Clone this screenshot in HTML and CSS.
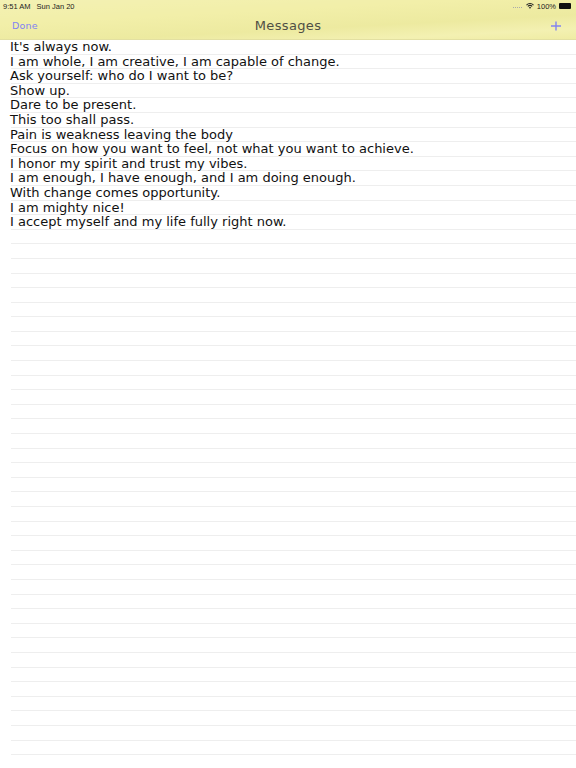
FILE: index.html
```html
<!DOCTYPE html>
<html lang="en">
<head>
<meta charset="utf-8">
<title>Messages</title>
<link rel="stylesheet" href="styles.css">
</head>
<body>
<header class="header">
  <div class="status">
    <div class="status-left"><span>9:51 AM</span><span>Sun Jan 20</span></div>
    <div class="status-right">
      <span class="dots"></span>
      <svg class="wifi" viewBox="0 0 12 9" width="8" height="6"><path d="M6 8.6 4.2 6.7a2.6 2.6 0 0 1 3.6 0ZM3.2 5.7 2.2 4.6a5.4 5.4 0 0 1 7.6 0L8.8 5.7a4 4 0 0 0-5.6 0ZM1.2 3.6.2 2.5a8.2 8.2 0 0 1 11.6 0l-1 1.1a6.8 6.8 0 0 0-9.6 0Z" fill="#222"/></svg>
      <span>100%</span>
      <span class="battery"></span>
    </div>
  </div>
  <div class="nav">
    <span class="done">Done</span>
    <span class="title">Messages</span>
    <svg class="plus" viewBox="0 0 10 10" width="10" height="10"><path d="M0 5h10M5 .5v9" stroke="#8284f0" stroke-width="1.4" fill="none"/></svg>
  </div>
</header>
<main class="list">
  <div class="row">It's always now.</div>
  <div class="row">I am whole, I am creative, I am capable of change.</div>
  <div class="row">Ask yourself: who do I want to be?</div>
  <div class="row">Show up.</div>
  <div class="row">Dare to be present.</div>
  <div class="row">This too shall pass.</div>
  <div class="row">Pain is weakness leaving the body</div>
  <div class="row">Focus on how you want to feel, not what you want to achieve.</div>
  <div class="row">I honor my spirit and trust my vibes.</div>
  <div class="row">I am enough, I have enough, and I am doing enough.</div>
  <div class="row">With change comes opportunity.</div>
  <div class="row">I am mighty nice!</div>
  <div class="row">I accept myself and my life fully right now.</div>
  <div class="row"></div><div class="row"></div><div class="row"></div><div class="row"></div><div class="row"></div><div class="row"></div><div class="row"></div><div class="row"></div><div class="row"></div>
  <div class="row"></div><div class="row"></div><div class="row"></div><div class="row"></div><div class="row"></div><div class="row"></div><div class="row"></div><div class="row"></div><div class="row"></div>
  <div class="row"></div><div class="row"></div><div class="row"></div><div class="row"></div><div class="row"></div><div class="row"></div><div class="row"></div><div class="row"></div><div class="row"></div>
  <div class="row"></div><div class="row"></div><div class="row"></div><div class="row"></div><div class="row"></div><div class="row"></div><div class="row"></div><div class="row"></div><div class="row"></div>
</main>
</body>
</html>
```
FILE: styles.css
```css
* { box-sizing: border-box; }
html, body { margin: 0; padding: 0; background: #fff; }
body { width: 576px; height: 768px; overflow: hidden; font-family: "DejaVu Sans", "Liberation Sans", sans-serif; }

.header {
  height: 40px;
  display: flex;
  flex-direction: column;
  background:
    linear-gradient(177deg, rgba(255,255,255,.12), rgba(255,255,255,0) 35%, rgba(190,190,80,.10) 65%, rgba(255,255,255,.10) 85%, rgba(190,190,80,.06)),
    #f2efa9;
  border-bottom: 1px solid #e3e0a2;
}
.status {
  height: 12px;
  padding: 0 3px;
  display: flex;
  justify-content: space-between;
  align-items: center;
  font: 7.5px "Liberation Sans", sans-serif;
  color: #222;
}
.status-left { display: flex; gap: 6px; }
.status-right { display: flex; align-items: center; gap: 3px; }
.dots { width: 9px; border-top: 1px dotted #aaa; margin-top: 3px; margin-right: 1px; }
.battery { width: 12px; height: 6px; background: #111; border-radius: 1px; margin-right: 2px; }
.nav {
  flex: 1;
  display: grid;
  grid-template-columns: 1fr auto 1fr;
  align-items: center;
  padding: 0 15px;
}
.done { font-size: 9.5px; letter-spacing: .2px; color: #7f82f4; margin-left: -3px; }
.title { font-size: 13px; letter-spacing: .35px; color: #4f4f45; }
.plus { justify-self: end; }
.list { display: flex; flex-direction: column; }
.row {
  height: 14.6px;
  padding-left: 10px;
  font-size: 13px;
  line-height: 14.6px;
  color: #111;
  white-space: nowrap;
  background: linear-gradient(#eeeeee, #eeeeee) right bottom / calc(100% - 11px) 1px no-repeat;
}
```
